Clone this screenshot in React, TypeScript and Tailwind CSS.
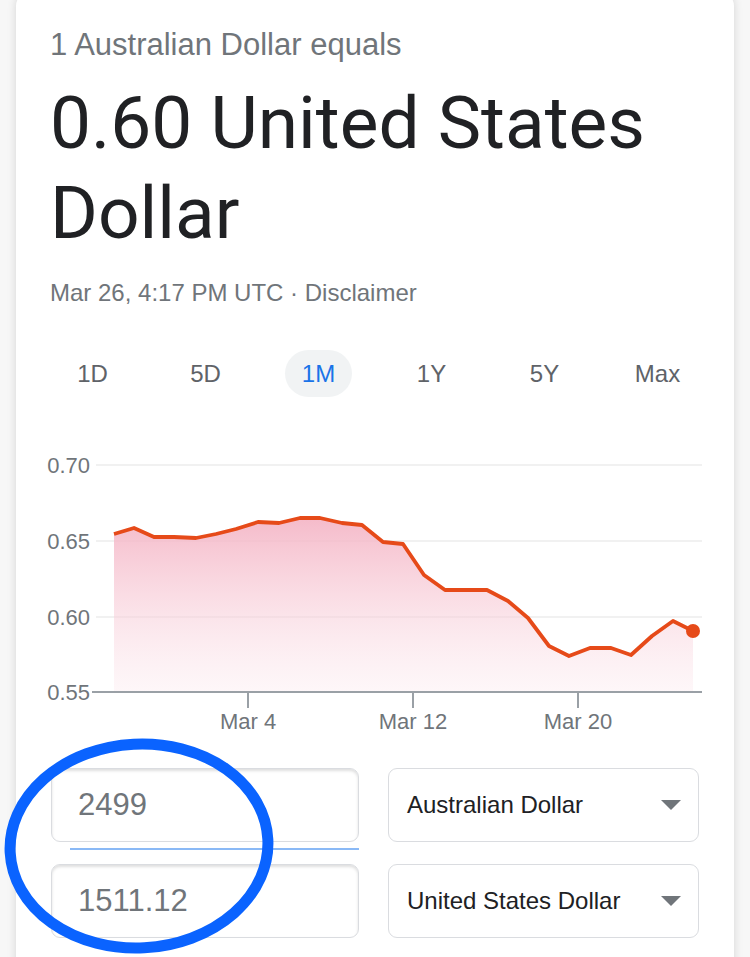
const points: [number, number][] = [
  [114, 534], [134, 528], [154, 537], [174, 537], [196, 538], [216, 534],
  [236, 529], [258, 522], [279, 523], [300, 518], [320, 518], [342, 523],
  [362, 525], [383, 542], [403, 544], [424, 575], [445, 590], [466, 590],
  [487, 590], [508, 601], [528, 618], [549, 646], [569, 656], [590, 648],
  [611, 648], [631, 655], [652, 636], [673, 621], [693, 631],
];

const ranges = ["1D", "5D", "1M", "1Y", "5Y", "Max"];
const yTicks = [
  { label: "0.70", y: 465 },
  { label: "0.65", y: 541 },
  { label: "0.60", y: 617 },
];
const xTicks = [
  { label: "Mar 4", x: 248 },
  { label: "Mar 12", x: 413 },
  { label: "Mar 20", x: 578 },
];

const sans = "font-['Liberation_Sans',Arial,sans-serif]";

function RateChart() {
  const line = points.map(([x, y], i) => `${i === 0 ? "M" : "L"}${x} ${y}`).join(" ");
  const area = `${line} L693 692 L114 692 Z`;

  return (
    <svg
      width={718}
      height={300}
      viewBox="16 440 718 300"
      className="block"
      style={{ fontFamily: "'Liberation Sans', Arial, sans-serif" }}
    >
      <defs>
        <linearGradient id="fill" gradientUnits="userSpaceOnUse" x1="0" y1="518" x2="0" y2="700">
          <stop offset="0" stopColor="#f4b3c4" stopOpacity="0.9" />
          <stop offset="1" stopColor="#fbe4ea" stopOpacity="0.25" />
        </linearGradient>
      </defs>

      {yTicks.map((t) => (
        <g key={t.label}>
          <line x1={96} x2={702} y1={t.y} y2={t.y} stroke="#f1f1f1" strokeWidth={2} />
          <text x={90} y={t.y} textAnchor="end" dominantBaseline="central" fontSize={22} fill="#70757a">
            {t.label}
          </text>
        </g>
      ))}

      <path d={area} fill="url(#fill)" />
      <path d={line} fill="none" stroke="#e64a19" strokeWidth={3.8} strokeLinejoin="round" />
      <circle cx={693} cy={631} r={7} fill="#e64a19" />

      <line x1={92} x2={702} y1={692} y2={692} stroke="#9aa0a6" strokeWidth={2} />
      <text x={90} y={692} textAnchor="end" dominantBaseline="central" fontSize={22} fill="#70757a">
        0.55
      </text>

      {xTicks.map((t) => (
        <g key={t.label}>
          <line x1={t.x} x2={t.x} y1={692} y2={708} stroke="#9aa0a6" strokeWidth={2} />
          <text x={t.x} y={721} textAnchor="middle" dominantBaseline="central" fontSize={22} fill="#70757a">
            {t.label}
          </text>
        </g>
      ))}
    </svg>
  );
}

function AmountBox({ value }: { value: string }) {
  return (
    <div className="h-[74px] rounded-[9px] border border-[#dadce0] bg-white shadow-[inset_0_2px_3px_rgba(0,0,0,0.13)] flex items-center pl-[26px]">
      <span className={`${sans} text-[31px] text-[#70757a]`}>{value}</span>
    </div>
  );
}

function CurrencySelect({ label }: { label: string }) {
  return (
    <div className="h-[74px] rounded-[9px] border border-[#dadce0] bg-white flex items-center justify-between pl-[18px] pr-[17px]">
      <span className={`${sans} text-[24px] text-[#202124]`}>{label}</span>
      <svg width="20" height="10" viewBox="0 0 20 10">
        <path d="M0 0 L20 0 L10 10 Z" fill="#70757a" />
      </svg>
    </div>
  );
}

export default function App() {
  return (
    <div className="relative w-[750px] h-[957px] overflow-hidden bg-[#f7f7f7]">
      <div className="mx-[16px] -mt-[8px] bg-white rounded-[14px] shadow-[0_0_10px_rgba(0,0,0,0.14)] pt-[35px] pb-[40px]">
        <div className="px-[34px]">
          <div className={`${sans} text-[31px] leading-[36px] text-[#70757a]`}>1 Australian Dollar equals</div>
          <div className="mt-[15px] font-['Roboto',sans-serif] text-[73px] leading-[90px] text-[#202124]">
            0.60 United States Dollar
          </div>
          <div className={`${sans} mt-[21px] text-[24px] leading-[28px] text-[#70757a]`}>
            Mar 26, 4:17 PM UTC · Disclaimer
          </div>
        </div>

        <div className="mt-[43px] px-[20px] grid grid-cols-6">
          {ranges.map((r) => (
            <div key={r} className="flex justify-center">
              <div
                className={`${sans} h-[47px] px-[17px] rounded-full flex items-center text-[24px] ${
                  r === "1M" ? "bg-[#f1f3f4] text-[#1a73e8]" : "text-[#5f6368]"
                }`}
              >
                {r}
              </div>
            </div>
          ))}
        </div>

        <div className="mt-[43px]">
          <RateChart />
        </div>

        <div className="mt-[28px] px-[35px] grid grid-cols-[308px_311px] gap-x-[29px]">
          <div className="flex flex-col">
            <AmountBox value="2499" />
            <div className="mt-[6px] ml-[19px] h-[2px] bg-[#8ab9f6]" />
            <div className="mt-[14px]">
              <AmountBox value="1511.12" />
            </div>
          </div>
          <div className="flex flex-col gap-[22px]">
            <CurrencySelect label="Australian Dollar" />
            <CurrencySelect label="United States Dollar" />
          </div>
        </div>
      </div>

      <svg className="absolute inset-0 pointer-events-none" width={750} height={957}>
        <ellipse
          cx={139}
          cy={846}
          rx={129}
          ry={102}
          fill="none"
          stroke="#0a63ff"
          strokeWidth={11}
          transform="rotate(-3 139 846)"
        />
      </svg>
    </div>
  );
}
